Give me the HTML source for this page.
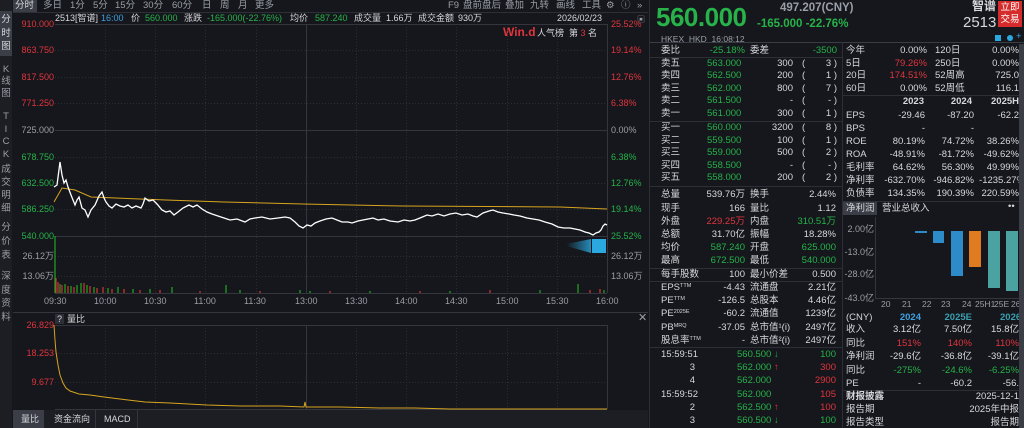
<!DOCTYPE html><html><head><meta charset="utf-8"><style>
*{margin:0;padding:0;box-sizing:border-box}
html,body{width:1024px;height:428px;overflow:hidden}
body{background:#15171c;font-family:"Liberation Sans","Noto Sans CJK SC",sans-serif;font-size:9.5px;color:#c8cbd0;position:relative}
.a{position:absolute;white-space:nowrap;line-height:12px}
.g{color:#27b24a}.r{color:#e0353d}.w{color:#d6d8dc}.gr{color:#9a9ea6}.b{color:#3fa0e0}
.R{text-align:right}
.hl{position:absolute;height:1px;background:#2c2f36}
.vl{position:absolute;width:1px;background:#2c2f36}
sup{font-size:5.5px;vertical-align:top;line-height:8px}
.v{position:absolute;left:0;width:12px;text-align:center;white-space:normal;font-size:9.5px}
</style></head><body>
<div class="a" style="left:0;top:0;width:12px;height:428px;background:#1c1e23"></div>
<div class="a" style="left:0;top:11px;width:12px;height:45px;background:#3b3e46"></div>
<div class="v w" style="top:13px;line-height:13.5px">分<br>时<br>图</div>
<div class="v gr" style="top:64px;line-height:12px">K<br>线<br>图</div>
<div class="v gr" style="top:111px;line-height:12.5px">T<br>I<br>C<br>K</div>
<div class="v gr" style="top:163px;line-height:13px">成<br>交<br>明<br>细</div>
<div class="v gr" style="top:221px;line-height:14px">分<br>价<br>表</div>
<div class="v gr" style="top:270px;line-height:13.5px">深<br>度<br>资<br>料</div>
<div class="a" style="left:13px;top:0;width:24px;height:12px;background:#3b3e46"></div>
<div class="a w" style="left:15px;top:0">分时</div>
<div class="a gr" style="left:43px;top:0">多日</div>
<div class="a gr" style="left:70px;top:0">1分</div>
<div class="a gr" style="left:93px;top:0">5分</div>
<div class="a gr" style="left:115px;top:0">15分</div>
<div class="a gr" style="left:143px;top:0">30分</div>
<div class="a gr" style="left:172px;top:0">60分</div>
<div class="a gr" style="left:202px;top:0">日</div>
<div class="a gr" style="left:220px;top:0">周</div>
<div class="a gr" style="left:238px;top:0">月</div>
<div class="a gr" style="left:255px;top:0">更多</div>
<div class="a gr" style="left:448px;top:0">F9</div>
<div class="a gr" style="left:463px;top:0">盘前盘后</div>
<div class="a gr" style="left:505px;top:0">叠加</div>
<div class="a gr" style="left:530px;top:0">九转</div>
<div class="a gr" style="left:556px;top:0">画线</div>
<div class="a gr" style="left:582px;top:0">工具</div>
<div class="a gr" style="left:606px;top:0">⚙</div>
<div class="a gr" style="left:621px;top:0">ⓘ</div>
<div class="a gr" style="left:637px;top:0">»</div>
<div class="hl" style="left:13px;top:12px;width:635px"></div>
<div class="a w" style="left:55px;top:12px;font-size:9px">2513[智谱]</div>
<div class="a b" style="left:101px;top:12px;font-size:9px">16:00</div>
<div class="a w" style="left:131px;top:12px;font-size:9px">价</div>
<div class="a g" style="left:145px;top:12px;font-size:9px">560.000</div>
<div class="a w" style="left:184px;top:12px;font-size:9px">涨跌</div>
<div class="a g" style="left:207px;top:12px;font-size:9px">-165.000(-22.76%)</div>
<div class="a w" style="left:290px;top:12px;font-size:9px">均价</div>
<div class="a g" style="left:315px;top:12px;font-size:9px">587.240</div>
<div class="a w" style="left:354px;top:12px;font-size:9px">成交量</div>
<div class="a w" style="left:386px;top:12px;font-size:9px">1.66万</div>
<div class="a w" style="left:418px;top:12px;font-size:9px">成交金额</div>
<div class="a w" style="left:458px;top:12px;font-size:9px">930万</div>
<div class="a w" style="left:557px;top:12px;font-size:9px">2026/02/23</div>
<div class="a gr" style="left:637px;top:14px;font-size:8px">▣</div>
<div class="a" style="left:503px;top:26px;color:#e0353d;font-weight:bold;font-size:12px">Win.d</div>
<div class="a w" style="left:537px;top:27px;font-size:9px">人气榜 &nbsp;第 <span class="r">3</span> 名</div>
<div class="a r R" style="right:970px;top:18px;font-size:9px">910.000</div>
<div class="a r R" style="right:970px;top:44px;font-size:9px">863.750</div>
<div class="a r R" style="right:970px;top:71px;font-size:9px">817.500</div>
<div class="a r R" style="right:970px;top:97px;font-size:9px">771.250</div>
<div class="a gr R" style="right:970px;top:124px;font-size:9px">725.000</div>
<div class="a g R" style="right:970px;top:151px;font-size:9px">678.750</div>
<div class="a g R" style="right:970px;top:177px;font-size:9px">632.500</div>
<div class="a g R" style="right:970px;top:203px;font-size:9px">586.250</div>
<div class="a g R" style="right:970px;top:230px;font-size:9px">540.000</div>
<div class="a gr R" style="right:970px;top:250px;font-size:9px">26.12万</div>
<div class="a gr R" style="right:970px;top:270px;font-size:9px">13.06万</div>
<div class="a r" style="left:611px;top:18px;font-size:9px">25.52%</div>
<div class="a r" style="left:611px;top:44px;font-size:9px">19.14%</div>
<div class="a r" style="left:611px;top:71px;font-size:9px">12.76%</div>
<div class="a r" style="left:611px;top:97px;font-size:9px">6.38%</div>
<div class="a gr" style="left:611px;top:124px;font-size:9px">0.00%</div>
<div class="a g" style="left:611px;top:151px;font-size:9px">6.38%</div>
<div class="a g" style="left:611px;top:177px;font-size:9px">12.76%</div>
<div class="a g" style="left:611px;top:203px;font-size:9px">19.14%</div>
<div class="a g" style="left:611px;top:230px;font-size:9px">25.52%</div>
<div class="a gr" style="left:611px;top:250px;font-size:9px">26.12万</div>
<div class="a gr" style="left:611px;top:270px;font-size:9px">13.06万</div>
<svg class="a" style="left:0;top:0" width="650" height="428">
<defs><linearGradient id="tr" x1="0" x2="1"><stop offset="0" stop-color="#2aa8e0" stop-opacity="0"/><stop offset="1" stop-color="#2aa8e0" stop-opacity=".8"/></linearGradient></defs>
<g stroke="#2a2d33" stroke-dasharray="1,2" stroke-width="1">
<line x1="55" y1="50.5" x2="607" y2="50.5"/><line x1="55" y1="77.5" x2="607" y2="77.5"/><line x1="55" y1="103.5" x2="607" y2="103.5"/><line x1="55" y1="157.5" x2="607" y2="157.5"/><line x1="55" y1="183.5" x2="607" y2="183.5"/><line x1="55" y1="209.5" x2="607" y2="209.5"/><line x1="55" y1="256.5" x2="607" y2="256.5"/><line x1="55" y1="276.5" x2="607" y2="276.5"/>
<line x1="105.5" y1="24" x2="105.5" y2="293"/><line x1="155.5" y1="24" x2="155.5" y2="293"/><line x1="205.5" y1="24" x2="205.5" y2="293"/><line x1="256.5" y1="24" x2="256.5" y2="293"/><line x1="356.5" y1="24" x2="356.5" y2="293"/><line x1="406.5" y1="24" x2="406.5" y2="293"/><line x1="456.5" y1="24" x2="456.5" y2="293"/><line x1="507.5" y1="24" x2="507.5" y2="293"/><line x1="557.5" y1="24" x2="557.5" y2="293"/>
<line x1="55" y1="353.5" x2="607" y2="353.5"/><line x1="55" y1="382.5" x2="607" y2="382.5"/>
<line x1="105.5" y1="325" x2="105.5" y2="409"/><line x1="155.5" y1="325" x2="155.5" y2="409"/><line x1="205.5" y1="325" x2="205.5" y2="409"/><line x1="256.5" y1="325" x2="256.5" y2="409"/><line x1="356.5" y1="325" x2="356.5" y2="409"/><line x1="406.5" y1="325" x2="406.5" y2="409"/><line x1="456.5" y1="325" x2="456.5" y2="409"/><line x1="507.5" y1="325" x2="507.5" y2="409"/><line x1="557.5" y1="325" x2="557.5" y2="409"/>
</g>
<g stroke="#33363d" stroke-width="1">
<line x1="55" y1="24.5" x2="607" y2="24.5"/><line x1="55" y1="130.5" x2="607" y2="130.5"/><line x1="55" y1="236.5" x2="607" y2="236.5"/><line x1="55" y1="293.5" x2="607" y2="293.5"/>
<line x1="306.5" y1="24" x2="306.5" y2="293"/><line x1="607.5" y1="24" x2="607.5" y2="293"/>
<line x1="55" y1="325.5" x2="607" y2="325.5"/><line x1="55" y1="409.5" x2="607" y2="409.5"/><line x1="306.5" y1="325" x2="306.5" y2="409"/><line x1="607.5" y1="325" x2="607.5" y2="409"/>
<line x1="13" y1="312.5" x2="648" y2="312.5"/>
</g>
<g stroke-width="1.2">
<g stroke="#d33">
<line x1="56" y1="293" x2="56" y2="278"/><line x1="58" y1="293" x2="58" y2="282"/><line x1="62" y1="293" x2="62" y2="285"/><line x1="68" y1="293" x2="68" y2="286"/><line x1="74" y1="293" x2="74" y2="287"/><line x1="84" y1="293" x2="84" y2="283"/><line x1="90" y1="293" x2="90" y2="286"/><line x1="97" y1="293" x2="97" y2="288"/><line x1="103" y1="293" x2="103" y2="287"/><line x1="112" y1="293" x2="112" y2="289"/><line x1="124" y1="293" x2="124" y2="289"/><line x1="140" y1="293" x2="140" y2="290"/><line x1="160" y1="293" x2="160" y2="290"/><line x1="200" y1="293" x2="200" y2="291"/><line x1="260" y1="293" x2="260" y2="291"/><line x1="330" y1="293" x2="330" y2="291"/><line x1="420" y1="293" x2="420" y2="291"/><line x1="490" y1="293" x2="490" y2="290"/><line x1="590" y1="293" x2="590" y2="290"/><line x1="600" y1="293" x2="600" y2="289"/>
</g>
<g stroke="#2a2">
<line x1="55" y1="293" x2="55" y2="236"/><line x1="60" y1="293" x2="60" y2="284"/><line x1="65" y1="293" x2="65" y2="284"/><line x1="71" y1="293" x2="71" y2="286"/><line x1="77" y1="293" x2="77" y2="285"/><line x1="81" y1="293" x2="81" y2="283"/><line x1="87" y1="293" x2="87" y2="285"/><line x1="94" y1="293" x2="94" y2="287"/><line x1="108" y1="293" x2="108" y2="288"/><line x1="118" y1="293" x2="118" y2="287"/><line x1="133" y1="293" x2="133" y2="289"/><line x1="150" y1="293" x2="150" y2="289"/><line x1="172" y1="293" x2="172" y2="287"/><line x1="226" y1="293" x2="226" y2="285"/><line x1="240" y1="293" x2="240" y2="290"/><line x1="300" y1="293" x2="300" y2="290"/><line x1="310" y1="293" x2="310" y2="291"/><line x1="370" y1="293" x2="370" y2="291"/><line x1="450" y1="293" x2="450" y2="291"/><line x1="540" y1="293" x2="540" y2="290"/><line x1="578" y1="293" x2="578" y2="284"/><line x1="604" y1="293" x2="604" y2="290"/>
</g></g>
<polyline fill="none" stroke="#d9a520" stroke-width="1" points="54,202 62,188 75,190 91,197 166,200 224,202 303,204 402,206 560,207 607,209"/>
<polyline fill="none" stroke="#fff" stroke-width="1.3" points="54,187 57,185 60,162 62,175 64,183 66,180 68,187 71,195 75,205 77,200 79,197 82,208 85,210 88,217 91,210 95,205 99,196 102,192 104,198 106,202 109,206 112,208 116,204 120,206 124,207 128,205 132,208 136,206 141,208 143,204 145,198 149,201 153,200 157,204 162,210 166,212 170,211 174,215 178,212 183,208 189,205 193,207 197,205 202,209 207,212 212,214 218,216 224,218 230,220 237,219 245,222 250,219 255,218 262,217 270,219 278,218 285,217 290,218 295,222 299,226 303,228 307,225 311,226 315,223 320,221 326,219 332,218 337,220 342,222 348,222 352,223 358,221 363,220 368,219 373,218 378,220 384,219 390,221 398,222 404,220 410,221 415,220 420,218 427,215 432,216 438,214 444,216 450,214 456,213 462,215 468,214 473,216 477,217 483,213 489,211 493,210 498,212 503,213 509,214 514,215 520,216 527,218 533,219 539,220 545,222 552,224 558,227 564,228 570,228 575,229 580,230 585,232 589,233 593,235 596,233 599,232 601,230 603,226 605,224 607,225"/>
<polygon points="566,244 591,239 591,253 566,246" fill="url(#tr)"/>
<rect x="592" y="239" width="14" height="14" fill="#2aa8e0"/>
<polyline fill="none" stroke="#d9a520" stroke-width="1" points="54,325 55,340 56,352 58,365 60,375 63,383 66,388 70,391 79,394 90,395 104,397 120,399 145,402 170,403 207,405 240,406 280,406 304,407 305,402 306,407 340,407 380,408 415,408 450,409 520,409 607,409"/>
</svg>
<div class="a gr" style="left:44px;top:295px;font-size:9px">09:30</div>
<div class="a gr" style="left:94px;top:295px;font-size:9px">10:00</div>
<div class="a gr" style="left:144px;top:295px;font-size:9px">10:30</div>
<div class="a gr" style="left:194px;top:295px;font-size:9px">11:00</div>
<div class="a gr" style="left:244px;top:295px;font-size:9px">11:30</div>
<div class="a gr" style="left:295px;top:295px;font-size:9px">13:00</div>
<div class="a gr" style="left:345px;top:295px;font-size:9px">13:30</div>
<div class="a gr" style="left:395px;top:295px;font-size:9px">14:00</div>
<div class="a gr" style="left:445px;top:295px;font-size:9px">14:30</div>
<div class="a gr" style="left:496px;top:295px;font-size:9px">15:00</div>
<div class="a gr" style="left:546px;top:295px;font-size:9px">15:30</div>
<div class="a gr" style="left:596px;top:295px;font-size:9px">16:00</div>
<div class="a" style="left:55px;top:314px;width:9px;height:10px;background:#2c2f36"></div>
<div class="a w" style="left:57px;top:313px;font-size:9px">?</div>
<div class="a w" style="left:67px;top:313px;font-size:9px">量比</div>
<div class="a gr" style="left:638px;top:312px;font-size:11px">✕</div>
<div class="a r R" style="right:970px;top:319px;font-size:9px">26.829</div>
<div class="a r R" style="right:970px;top:347px;font-size:9px">18.253</div>
<div class="a r R" style="right:970px;top:376px;font-size:9px">9.677</div>
<div class="a" style="left:13px;top:410px;width:635px;height:18px;background:#1c1e23"></div>
<div class="a" style="left:13px;top:410px;width:31px;height:18px;background:#3b3e46"></div>
<div class="a w" style="left:21px;top:413px;font-size:9px">量比</div>
<div class="a w" style="left:54px;top:413px;font-size:9px">资金流向</div>
<div class="vl" style="left:95px;top:410px;height:18px;background:#33363d"></div>
<div class="a w" style="left:104px;top:413px;font-size:9px">MACD</div>
<div class="vl" style="left:137px;top:410px;height:18px;background:#33363d"></div>
<!-- right panel -->
<div class="vl" style="left:649px;top:0;height:428px;background:#2c2f36"></div>
<div class="a g" style="left:656px;top:3px;font-size:26px;line-height:28px;font-weight:bold;letter-spacing:-0.5px">560.000</div>
<div class="a gr" style="left:780px;top:2px;font-size:11.5px;font-weight:bold">497.207(CNY)</div>
<div class="a g" style="left:757px;top:18px;font-size:11.5px;font-weight:bold">-165.000 -22.76%</div>
<div class="a w" style="left:972px;top:0;font-size:12px;font-weight:bold">智谱</div>
<div class="a w" style="left:963px;top:15px;font-size:15px;line-height:15px">2513</div>
<div class="a" style="left:998px;top:1px;width:24px;height:26px;background:#d62b2b;color:#fff;font-size:9.5px;line-height:12px;text-align:center;padding-top:1px">立即<br>交易</div>
<div class="a gr" style="left:661px;top:33px;font-size:8.5px">HKEX &nbsp;HKD &nbsp;16:08:12</div>
<div class="a" style="left:995px;top:35px;width:6px;height:6px;background:#2aa8e0"></div>
<div class="a" style="left:1007px;top:35px;width:6px;height:6px;background:#2aa8e0;border-radius:3px"></div>
<div class="a b" style="left:1016px;top:31px">+</div>
<div class="hl" style="left:650px;top:42px;width:374px;background:#3a3d44"></div>
<div class="vl" style="left:842px;top:42px;height:386px"></div>
<div class="a w" style="left:661px;top:45px">委比</div><div class="a g R" style="right:279px;top:45px">-25.18%</div><div class="a w" style="left:750px;top:45px">委差</div><div class="a g R" style="right:187px;top:45px">-3500</div>
<div class="hl" style="left:650px;top:57px;width:192px"></div>
<div class="a w" style="left:661px;top:58px">卖五</div><div class="a g" style="left:707px;top:58px">563.000</div><div class="a w R" style="right:231px;top:58px">300</div><div class="a w" style="left:802px;top:58px">(</div><div class="a w R" style="right:187px;top:58px">3 )</div>
<div class="a w" style="left:661px;top:70px">卖四</div><div class="a g" style="left:707px;top:70px">562.500</div><div class="a w R" style="right:231px;top:70px">200</div><div class="a w" style="left:802px;top:70px">(</div><div class="a w R" style="right:187px;top:70px">1 )</div>
<div class="a w" style="left:661px;top:83px">卖三</div><div class="a g" style="left:707px;top:83px">562.000</div><div class="a w R" style="right:231px;top:83px">800</div><div class="a w" style="left:802px;top:83px">(</div><div class="a w R" style="right:187px;top:83px">7 )</div>
<div class="a w" style="left:661px;top:95px">卖二</div><div class="a g" style="left:707px;top:95px">561.500</div><div class="a w R" style="right:231px;top:95px">-</div><div class="a w" style="left:802px;top:95px">(</div><div class="a w R" style="right:187px;top:95px">- )</div>
<div class="a w" style="left:661px;top:108px">卖一</div><div class="a g" style="left:707px;top:108px">561.000</div><div class="a w R" style="right:231px;top:108px">300</div><div class="a w" style="left:802px;top:108px">(</div><div class="a w R" style="right:187px;top:108px">1 )</div>
<div class="hl" style="left:650px;top:121px;width:192px"></div>
<div class="a w" style="left:661px;top:122px">买一</div><div class="a g" style="left:707px;top:122px">560.000</div><div class="a w R" style="right:231px;top:122px">3200</div><div class="a w" style="left:802px;top:122px">(</div><div class="a w R" style="right:187px;top:122px">8 )</div>
<div class="a w" style="left:661px;top:135px">买二</div><div class="a g" style="left:707px;top:135px">559.500</div><div class="a w R" style="right:231px;top:135px">100</div><div class="a w" style="left:802px;top:135px">(</div><div class="a w R" style="right:187px;top:135px">1 )</div>
<div class="a w" style="left:661px;top:147px">买三</div><div class="a g" style="left:707px;top:147px">559.000</div><div class="a w R" style="right:231px;top:147px">500</div><div class="a w" style="left:802px;top:147px">(</div><div class="a w R" style="right:187px;top:147px">2 )</div>
<div class="a w" style="left:661px;top:160px">买四</div><div class="a g" style="left:707px;top:160px">558.500</div><div class="a w R" style="right:231px;top:160px">-</div><div class="a w" style="left:802px;top:160px">(</div><div class="a w R" style="right:187px;top:160px">- )</div>
<div class="a w" style="left:661px;top:172px">买五</div><div class="a g" style="left:707px;top:172px">558.000</div><div class="a w R" style="right:231px;top:172px">200</div><div class="a w" style="left:802px;top:172px">(</div><div class="a w R" style="right:187px;top:172px">2 )</div>
<div class="hl" style="left:650px;top:186px;width:192px"></div>
<div class="a w" style="left:661px;top:189px">总量</div><div class="a w R" style="right:279px;top:189px">539.76万</div><div class="a w" style="left:750px;top:189px">换手</div><div class="a w R" style="right:188px;top:189px">2.44%</div>
<div class="a w" style="left:661px;top:203px">现手</div><div class="a w R" style="right:279px;top:203px">166</div><div class="a w" style="left:750px;top:203px">量比</div><div class="a w R" style="right:188px;top:203px">1.12</div>
<div class="a w" style="left:661px;top:216px">外盘</div><div class="a r R" style="right:279px;top:216px">229.25万</div><div class="a w" style="left:750px;top:216px">内盘</div><div class="a g R" style="right:188px;top:216px">310.51万</div>
<div class="a w" style="left:661px;top:229px">总额</div><div class="a w R" style="right:279px;top:229px">31.70亿</div><div class="a w" style="left:750px;top:229px">振幅</div><div class="a w R" style="right:188px;top:229px">18.28%</div>
<div class="a w" style="left:661px;top:242px">均价</div><div class="a g R" style="right:279px;top:242px">587.240</div><div class="a w" style="left:750px;top:242px">开盘</div><div class="a g R" style="right:188px;top:242px">625.000</div>
<div class="a w" style="left:661px;top:255px">最高</div><div class="a g R" style="right:279px;top:255px">672.500</div><div class="a w" style="left:750px;top:255px">最低</div><div class="a g R" style="right:188px;top:255px">540.000</div>
<div class="hl" style="left:650px;top:268px;width:192px"></div>
<div class="a w" style="left:661px;top:269px">每手股数</div><div class="a w R" style="right:279px;top:269px">100</div><div class="a w" style="left:750px;top:269px">最小价差</div><div class="a w R" style="right:188px;top:269px">0.500</div>
<div class="hl" style="left:650px;top:281px;width:192px"></div>
<div class="a w" style="left:661px;top:282px">EPS<sup>TTM</sup></div><div class="a w R" style="right:279px;top:282px">-4.43</div><div class="a w" style="left:750px;top:282px">流通盘</div><div class="a w R" style="right:188px;top:282px">2.21亿</div>
<div class="a w" style="left:661px;top:295px">PE<sup>TTM</sup></div><div class="a w R" style="right:279px;top:295px">-126.5</div><div class="a w" style="left:750px;top:295px">总股本</div><div class="a w R" style="right:188px;top:295px">4.46亿</div>
<div class="a w" style="left:661px;top:308px">PE<sup>2025E</sup></div><div class="a w R" style="right:279px;top:308px">-60.2</div><div class="a w" style="left:750px;top:308px">流通值</div><div class="a w R" style="right:188px;top:308px">1239亿</div>
<div class="a w" style="left:661px;top:322px">PB<sup>MRQ</sup></div><div class="a w R" style="right:279px;top:322px">-37.05</div><div class="a w" style="left:750px;top:322px">总市值¹(i)</div><div class="a w R" style="right:188px;top:322px">2497亿</div>
<div class="a w" style="left:661px;top:335px">股息率<sup>TTM</sup></div><div class="a w R" style="right:279px;top:335px">-</div><div class="a w" style="left:750px;top:335px">总市值²(i)</div><div class="a w R" style="right:188px;top:335px">2497亿</div>
<div class="hl" style="left:650px;top:347px;width:192px"></div>
<div class="a w" style="left:661px;top:349px">15:59:51</div><div class="a g" style="left:737px;top:349px">560.500 ↓</div><div class="a g R" style="right:188px;top:349px">100</div>
<div class="a w R" style="right:329px;top:362px">3</div><div class="a g" style="left:737px;top:362px">562.000 <span class="r">↑</span></div><div class="a r R" style="right:188px;top:362px">300</div>
<div class="a w R" style="right:329px;top:375px">4</div><div class="a g" style="left:737px;top:375px">562.000</div><div class="a r R" style="right:188px;top:375px">2900</div>
<div class="a w" style="left:661px;top:389px">15:59:52</div><div class="a g" style="left:737px;top:389px">562.000</div><div class="a r R" style="right:188px;top:389px">105</div>
<div class="a w R" style="right:329px;top:402px">2</div><div class="a g" style="left:737px;top:402px">562.500 <span class="r">↑</span></div><div class="a r R" style="right:188px;top:402px">100</div>
<div class="a w R" style="right:329px;top:415px">3</div><div class="a g" style="left:737px;top:415px">560.500 ↓</div><div class="a g R" style="right:188px;top:415px">100</div>
<!-- right col -->
<div style="position:absolute;left:843px;top:43px;width:176px;height:385px;overflow:hidden">
<div style="position:absolute;left:-843px;top:-43px;width:1019px;height:428px">
<div class="a w" style="left:846px;top:45px">今年</div><div class="a w R" style="right:92px;top:45px">0.00%</div><div class="a w" style="left:935px;top:45px">120日</div><div class="a w R" style="right:0;top:45px">0.00%</div>
<div class="a w" style="left:846px;top:58px">5日</div><div class="a r R" style="right:92px;top:58px">79.26%</div><div class="a w" style="left:935px;top:58px">250日</div><div class="a w R" style="right:0;top:58px">0.00%</div>
<div class="a w" style="left:846px;top:70px">20日</div><div class="a r R" style="right:92px;top:70px">174.51%</div><div class="a w" style="left:935px;top:70px">52周高</div><div class="a w R" style="right:0;top:70px">725.0</div>
<div class="a w" style="left:846px;top:83px">60日</div><div class="a w R" style="right:92px;top:83px">0.00%</div><div class="a w" style="left:935px;top:83px">52周低</div><div class="a w R" style="right:0;top:83px">116.1</div>
<div class="hl" style="left:843px;top:95px;width:176px"></div>
<div class="a w R" style="right:95px;top:96px;font-weight:bold">2023</div><div class="a w R" style="right:47px;top:96px;font-weight:bold">2024</div><div class="a w R" style="right:0;top:96px;font-weight:bold">2025H</div>
<div class="a w" style="left:846px;top:110px">EPS</div><div class="a w R" style="right:94px;top:110px">-29.46</div><div class="a w R" style="right:45px;top:110px">-87.20</div><div class="a w R" style="right:0;top:110px">-62.2</div>
<div class="a w" style="left:846px;top:123px">BPS</div><div class="a w R" style="right:94px;top:123px">-</div><div class="a w R" style="right:45px;top:123px">-</div>
<div class="a w" style="left:846px;top:136px">ROE</div><div class="a w R" style="right:94px;top:136px">80.19%</div><div class="a w R" style="right:45px;top:136px">74.72%</div><div class="a w R" style="right:0;top:136px">38.26%</div>
<div class="a w" style="left:846px;top:149px">ROA</div><div class="a w R" style="right:94px;top:149px">-48.91%</div><div class="a w R" style="right:45px;top:149px">-81.72%</div><div class="a w R" style="right:0;top:149px">-49.62%</div>
<div class="a w" style="left:846px;top:162px">毛利率</div><div class="a w R" style="right:94px;top:162px">64.62%</div><div class="a w R" style="right:45px;top:162px">56.30%</div><div class="a w R" style="right:0;top:162px">49.99%</div>
<div class="a w" style="left:846px;top:175px">净利率</div><div class="a w R" style="right:94px;top:175px">-632.70%</div><div class="a w R" style="right:45px;top:175px">-946.82%</div><div class="a w R" style="right:-6px;top:175px">-1235.27%</div>
<div class="a w" style="left:846px;top:188px">负债率</div><div class="a w R" style="right:94px;top:188px">134.35%</div><div class="a w R" style="right:45px;top:188px">190.39%</div><div class="a w R" style="right:0;top:188px">220.59%</div>
<div class="hl" style="left:843px;top:201px;width:176px"></div>
<div class="a" style="left:843px;top:202px;width:34px;height:13px;background:#3b3e46"></div>
<div class="a w" style="left:846px;top:203px">净利润</div><div class="a w" style="left:882px;top:203px">营业总收入</div><div class="a w" style="left:1008px;top:201px">••</div>
<div class="a gr R" style="right:145px;top:223px;font-size:9px">2.00亿</div>
<div class="a gr R" style="right:145px;top:246px;font-size:9px">-13.0亿</div>
<div class="a gr R" style="right:145px;top:268px;font-size:9px">-28.0亿</div>
<div class="a gr R" style="right:145px;top:292px;font-size:9px">-43.0亿</div>
<svg class="a" style="left:843px;top:215px" width="176" height="100">
<line x1="32.5" y1="2" x2="32.5" y2="83" stroke="#33363d"/>
<line x1="32" y1="83.5" x2="176" y2="83.5" stroke="#33363d"/>
<rect x="72" y="16" width="12" height="2" fill="#2e8bc9"/>
<rect x="90" y="16" width="11" height="12" fill="#2e8bc9"/>
<rect x="108" y="16" width="12" height="45" fill="#2e8bc9"/>
<rect x="126" y="16" width="12" height="36" fill="#e07b20"/>
<rect x="145" y="16" width="12" height="57" fill="#4aa3a0"/>
<rect x="163" y="16" width="12" height="60" fill="#4aa3a0"/>
</svg>
<div class="a gr" style="left:881px;top:298px;font-size:8.5px">20</div>
<div class="a gr" style="left:902px;top:298px;font-size:8.5px">21</div>
<div class="a gr" style="left:922px;top:298px;font-size:8.5px">22</div>
<div class="a gr" style="left:941px;top:298px;font-size:8.5px">23</div>
<div class="a gr" style="left:962px;top:298px;font-size:8.5px">24</div>
<div class="a gr" style="left:975px;top:298px;font-size:8.5px">25H1</div>
<div class="a gr" style="left:994px;top:298px;font-size:8.5px">25E</div>
<div class="a gr" style="left:1011px;top:298px;font-size:8.5px">26E</div>
<div class="a w" style="left:846px;top:312px">(CNY)</div><div class="a b R" style="right:98px;top:312px;font-weight:bold">2024</div><div class="a R" style="right:47px;top:312px;font-weight:bold;color:#3a9fb0">2025E</div><div class="a" style="left:1000px;top:312px;font-weight:bold;color:#3a9fb0">2026</div>
<div class="a w" style="left:846px;top:324px">收入</div><div class="a w R" style="right:98px;top:324px">3.12亿</div><div class="a w R" style="right:47px;top:324px">7.50亿</div><div class="a w R" style="right:0;top:324px">15.8亿</div>
<div class="a w" style="left:846px;top:338px">同比</div><div class="a r R" style="right:98px;top:338px">151%</div><div class="a r R" style="right:47px;top:338px">140%</div><div class="a r R" style="right:0;top:338px">110%</div>
<div class="a w" style="left:846px;top:351px">净利润</div><div class="a w R" style="right:98px;top:351px">-29.6亿</div><div class="a w R" style="right:47px;top:351px">-36.8亿</div><div class="a w R" style="right:0;top:351px">-39.1亿</div>
<div class="a w" style="left:846px;top:365px">同比</div><div class="a g R" style="right:98px;top:365px">-275%</div><div class="a g R" style="right:47px;top:365px">-24.6%</div><div class="a g R" style="right:0;top:365px">-6.25%</div>
<div class="a w" style="left:846px;top:378px">PE</div><div class="a w R" style="right:98px;top:378px">-</div><div class="a w R" style="right:47px;top:378px">-60.2</div><div class="a w R" style="right:0;top:378px">-56.</div>
<div class="hl" style="left:843px;top:390px;width:176px"></div>
<div class="a w" style="left:846px;top:391px;font-weight:bold">财报披露</div><div class="a w R" style="right:0;top:391px">2025-12-1</div>
<div class="a w" style="left:846px;top:404px">报告期</div><div class="a w R" style="right:0;top:404px">2025年中报</div>
<div class="a w" style="left:846px;top:417px">报告类型</div><div class="a w R" style="right:0;top:417px">报告期</div>
</div></div>
<div class="a" style="left:1019px;top:44px;width:5px;height:384px;background:#3a3d44"></div>
</body></html>
